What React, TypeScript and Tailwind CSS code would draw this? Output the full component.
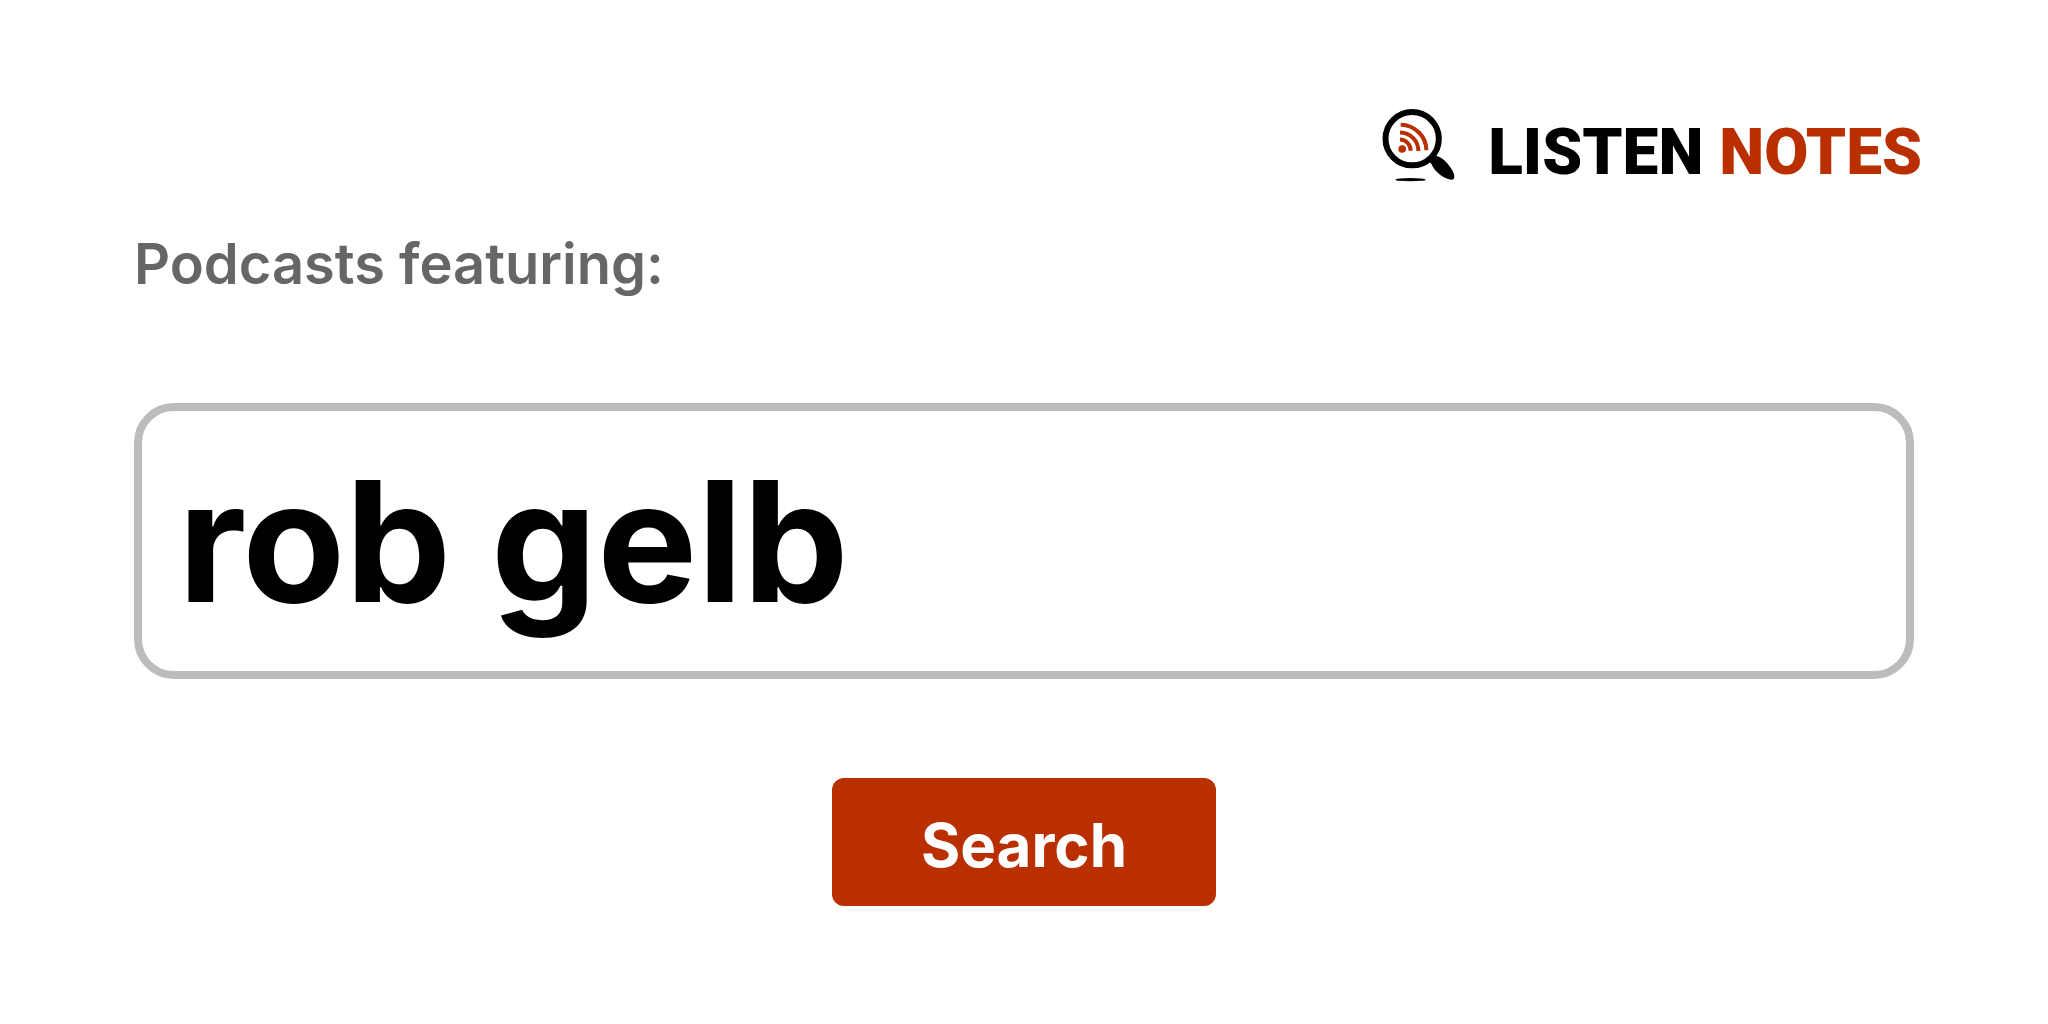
function LogoMark() {
  return (
    <svg viewBox="40 40 222 222" className="size-[74px] shrink-0" aria-hidden="true">
      {/* lens */}
      <circle cx="130.500" cy="132" r="80" fill="#fff" stroke="#000" strokeWidth="18" />
      {/* handle */}
      <path
        d="M183 203 L203 183 C214 187 224 192 235 205 C249 221 257 236 257 246 C257 252 254 255 248 255 C238 255 220 247 209 236 C197 225 191 215 188 207 Z"
        fill="#000"
      />
      <ellipse cx="125.500" cy="255" rx="45" ry="5" fill="#000" />
      {/* feed waves */}
      <g fill="none" stroke="#b92f00" strokeWidth="12">
        <path d="M96 90 C138 91 173 124 173 167" />
        <path d="M94 113.500 C125 114 149 138 149 169" />
        <path d="M94 134.500 C112 135 126 149 126 168" />
      </g>
      <circle cx="100.500" cy="163" r="11.500" fill="#b92f00" />
    </svg>
  );
}

export default function App() {
  return (
    <div className="min-h-screen bg-white pt-[100px] font-['Inter',sans-serif]">
      <header className="flex justify-end px-[126px]">
        <a href="/" className="flex items-center gap-8">
          <LogoMark />
          <span className="pt-4 font-['Roboto',sans-serif] text-[64px] leading-[74px] font-black text-black">
            LISTEN <span className="text-[#b92f00]">NOTES</span>
          </span>
        </a>
      </header>

      <form className="flex flex-col px-[134px] pt-[34px]" onSubmit={(e) => e.preventDefault()}>
        <label htmlFor="query" className="text-[56px] leading-[80px] font-semibold text-[#666]">
          Podcasts featuring:
        </label>
        <input
          id="query"
          type="text"
          defaultValue="rob gelb"
          className="mt-[99px] h-[276px] w-full rounded-[40px] border-8 border-[#bcbcbc] bg-white px-9 text-[168px] font-bold text-black outline-none"
        />
        <button
          type="submit"
          className="mt-[99px] h-32 w-96 self-center rounded-xl bg-[#b92f00] pt-1.5 text-[60px] font-bold text-white"
        >
          Search
        </button>
      </form>
    </div>
  );
}
